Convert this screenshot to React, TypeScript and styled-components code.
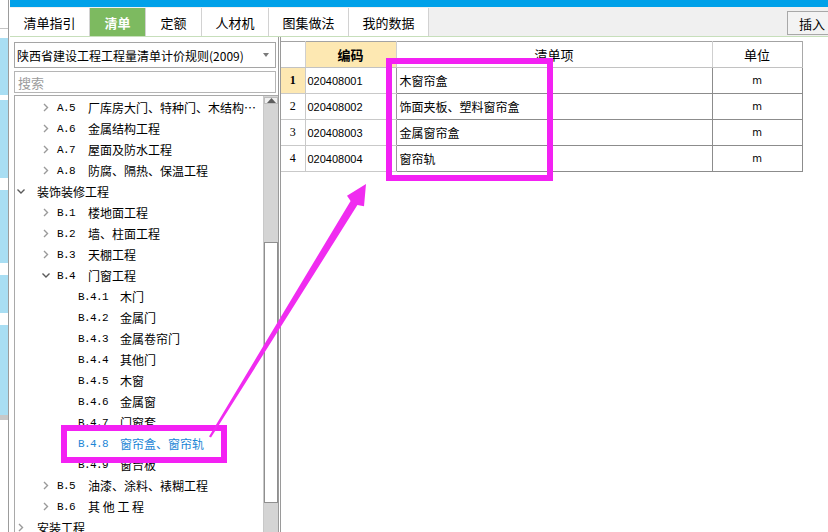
import React from 'react'
import styled, { createGlobalStyle, css } from 'styled-components'

const GlobalStyle = createGlobalStyle`
  html, body {
    margin: 0;
    padding: 0;
  }
  body {
    width: 828px;
    height: 532px;
    overflow: hidden;
    background: #fff;
    font-family: "Noto Sans CJK SC", "Liberation Sans", sans-serif;
    color: #000;
  }
  * {
    box-sizing: border-box;
  }
`

type TreeRow = {
  level: 1 | 2 | 3
  chevron?: 'right' | 'down'
  code?: string
  name: string
  active?: boolean
}

const treeRows: TreeRow[] = [
  { level: 2, chevron: 'right', code: 'A.5', name: '厂库房大门、特种门、木结构…' },
  { level: 2, chevron: 'right', code: 'A.6', name: '金属结构工程' },
  { level: 2, chevron: 'right', code: 'A.7', name: '屋面及防水工程' },
  { level: 2, chevron: 'right', code: 'A.8', name: '防腐、隔热、保温工程' },
  { level: 1, chevron: 'down', name: '装饰装修工程' },
  { level: 2, chevron: 'right', code: 'B.1', name: '楼地面工程' },
  { level: 2, chevron: 'right', code: 'B.2', name: '墙、柱面工程' },
  { level: 2, chevron: 'right', code: 'B.3', name: '天棚工程' },
  { level: 2, chevron: 'down', code: 'B.4', name: '门窗工程' },
  { level: 3, code: 'B.4.1', name: '木门' },
  { level: 3, code: 'B.4.2', name: '金属门' },
  { level: 3, code: 'B.4.3', name: '金属卷帘门' },
  { level: 3, code: 'B.4.4', name: '其他门' },
  { level: 3, code: 'B.4.5', name: '木窗' },
  { level: 3, code: 'B.4.6', name: '金属窗' },
  { level: 3, code: 'B.4.7', name: '门窗套' },
  { level: 3, code: 'B.4.8', name: '窗帘盒、窗帘轨', active: true },
  { level: 3, code: 'B.4.9', name: '窗台板' },
  { level: 2, chevron: 'right', code: 'B.5', name: '油漆、涂料、裱糊工程' },
  { level: 2, chevron: 'right', code: 'B.6', name: '其 他 工 程' },
  { level: 1, chevron: 'right', name: '安装工程' },
]

const items = [
  { no: 1, code: '020408001', name: '木窗帘盒', unit: 'm' },
  { no: 2, code: '020408002', name: '饰面夹板、塑料窗帘盒', unit: 'm' },
  { no: 3, code: '020408003', name: '金属窗帘盒', unit: 'm' },
  { no: 4, code: '020408004', name: '窗帘轨', unit: 'm' },
]

const tabs = [
  { label: '清单指引', width: 80 },
  { label: '清单', width: 56, active: true },
  { label: '定额', width: 56 },
  { label: '人材机', width: 67 },
  { label: '图集做法', width: 80 },
  { label: '我的数据', width: 80 },
]

// window behind, only a sliver of it is visible
const stripBands: [number, string][] = [
  [28, '#ffffff'],
  [1, '#c4c4c4'],
  [9, '#ffffff'],
  [57, '#a9def3'],
  [5, '#ffffff'],
  [78, '#a9def3'],
  [12, '#ffffff'],
  [73, '#a9def3'],
  [12, '#ffffff'],
  [38, '#a9def3'],
  [12, '#ffffff'],
  [90, '#a9def3'],
  [5, '#c8c8c8'],
  [112, '#ffffff'],
]

export default function App() {
  return (
    <Page>
      <GlobalStyle />
      <SideStrip>
        {stripBands.map(([h, c], i) => (
          <Band key={i} $h={h} $color={c} />
        ))}
      </SideStrip>
      <Main>
        <TopBar />
        <TabBar>
          {tabs.map(t => (
            <Tab key={t.label} $width={t.width} $active={t.active}>
              {t.label}
            </Tab>
          ))}
          <Spacer />
          <InsertButton>插入</InsertButton>
        </TabBar>
        <Body>
          <LeftPanel>
            <Select>
              <span>陕西省建设工程工程量清单计价规则(2009)</span>
              <Caret />
            </Select>
            <Search placeholder="搜索" />
            <Tree>
              <TreeList>
                {treeRows.map((r, i) => (
                  <Row key={i} $level={r.level} $active={r.active}>
                    {r.chevron && (
                      <Chevron $level={r.level}>
                        {r.chevron === 'right' ? (
                          <svg width="8" height="9" viewBox="0 0 8 9">
                            <path d="M2 1 L5.5 4.5 L2 8" fill="none" stroke="#9a9a9a" strokeWidth="1.4" />
                          </svg>
                        ) : (
                          <svg width="8" height="9" viewBox="0 0 8 9">
                            <path d="M0.5 2.5 L4 6 L7.5 2.5" fill="none" stroke="#5a5a5a" strokeWidth="1.4" />
                          </svg>
                        )}
                      </Chevron>
                    )}
                    {r.code && <Code $level={r.level}>{r.code}</Code>}
                    <Name>{r.name}</Name>
                  </Row>
                ))}
              </TreeList>
              <ScrollBar>
                <ScrollUp>
                  <svg width="9" height="5" viewBox="0 0 9 5">
                    <path d="M0 5 L4.5 0 L9 5 Z" fill="#5e5e5e" />
                  </svg>
                </ScrollUp>
                <TrackPart $h={138} />
                <Thumb />
                <TrackPart $h={40} />
              </ScrollBar>
            </Tree>
          </LeftPanel>
          <TablePanel>
            <Grid>
              <colgroup>
                <col style={{ width: 24 }} />
                <col style={{ width: 91 }} />
                <col style={{ width: 316 }} />
                <col style={{ width: 90 }} />
              </colgroup>
              <thead>
                <tr>
                  <HeadCell />
                  <HeadCell $yellow>编码</HeadCell>
                  <HeadCell>清单项</HeadCell>
                  <HeadCell $last>单位</HeadCell>
                </tr>
              </thead>
              <tbody>
                {items.map((it, i) => (
                  <tr key={it.no}>
                    <NoCell $selected={i === 0}>{it.no}</NoCell>
                    <CodeCell $selected={i === 0}>{it.code}</CodeCell>
                    <ItemCell>{it.name}</ItemCell>
                    <UnitCell>{it.unit}</UnitCell>
                  </tr>
                ))}
              </tbody>
            </Grid>
          </TablePanel>
        </Body>
      </Main>

      <Highlight $left={386} $top={58} $width={167} $height={123} />
      <Highlight $left={61} $top={425} $width={166} $height={38} />
      <ArrowLayer width="828" height="532" viewBox="0 0 828 532">
        <polygon
          points="209,436.4 350.6,200.9 347,195.8 366,184 364,206.3 357.4,205.1 211,437.6"
          fill="#f02cf0"
        />
      </ArrowLayer>
    </Page>
  )
}

const Page = styled.div`
  position: relative;
  width: 828px;
  height: 532px;
  display: flex;
  overflow: hidden;
`

const SideStrip = styled.div`
  width: 9px;
  margin-right: 1px;
  border-right: 1px solid #9c9c9c;
  display: flex;
  flex-direction: column;
`

const Band = styled.div<{ $h: number; $color: string }>`
  height: ${p => p.$h}px;
  flex-shrink: 0;
  background: ${p => p.$color};
`

const Main = styled.div`
  flex: 1;
  display: flex;
  flex-direction: column;
  min-width: 0;
`

const TopBar = styled.div`
  height: 7px;
  background: #00a1e9;
`

const TabBar = styled.div`
  height: 30px;
  padding-top: 1px;
  display: flex;
  background: #f0f0f0;
  border-bottom: 1px solid #c7dfbb;
`

const Tab = styled.div<{ $width: number; $active?: boolean }>`
  width: ${p => p.$width}px;
  flex-shrink: 0;
  display: flex;
  align-items: center;
  justify-content: center;
  font-size: 13px;
  background: #fff;
  border-right: 1px solid #d2d2d2;
  ${p =>
    p.$active &&
    css`
      background: #7dba60;
      color: #fff;
      font-weight: 700;
    `}
`

const Spacer = styled.div`
  flex: 1;
`

const InsertButton = styled.div`
  flex-shrink: 0;
  margin-top: 3px;
  height: 24px;
  width: 60px;
  margin-right: -19px;
  padding-left: 11px;
  display: flex;
  align-items: center;
  font-size: 13px;
  background: #f3f3f3;
  border: 1px solid #a8a8a8;
`

const Body = styled.div`
  flex: 1;
  display: flex;
  min-height: 0;
`

const LeftPanel = styled.div`
  width: 268px;
  padding: 5px 0 0 4px;
  display: flex;
  flex-direction: column;
`

const Select = styled.div`
  width: 262px;
  height: 26px;
  border: 1px solid #a5a5a5;
  display: flex;
  align-items: center;
  justify-content: space-between;
  padding: 0 6px 0 2px;
  font-size: 12px;
  background: #fff;
`

const Caret = styled.span`
  width: 0;
  height: 0;
  border-left: 3px solid transparent;
  border-right: 3px solid transparent;
  border-top: 4px solid #7a7a7a;
`

const Search = styled.input`
  width: 262px;
  height: 22px;
  margin-top: 3px;
  border: 1px solid #b5b5b5;
  padding: 0 3px;
  font-family: "Noto Sans CJK SC", sans-serif;
  font-size: 13px;
  outline: none;
  &::placeholder {
    color: #9c9c9c;
  }
`

const Tree = styled.div`
  flex: 1;
  min-height: 0;
  width: 264px;
  margin-top: 2px;
  border-top: 1px solid #a9a9a9;
  border-left: 1px solid #a9a9a9;
  display: flex;
  overflow: hidden;
`

const TreeList = styled.div`
  flex: 1;
  padding-top: 1px;
  overflow: hidden;
`

const Row = styled.div<{ $level: number; $active?: boolean }>`
  height: 21px;
  display: flex;
  align-items: center;
  white-space: pre;
  padding-left: ${p => (p.$level === 1 ? 2 : p.$level === 2 ? 27 : 63)}px;
  color: ${p => (p.$active ? '#1c86d6' : '#000')};
`

const Chevron = styled.span<{ $level: number }>`
  width: 8px;
  height: 9px;
  display: flex;
  margin-right: ${p => (p.$level === 1 ? 12 : 7)}px;
`

const Code = styled.span<{ $level: number }>`
  width: ${p => (p.$level === 2 ? 31 : 42)}px;
  font-family: "Liberation Mono", monospace;
  font-size: 11px;
  letter-spacing: -0.6px;
`

const Name = styled.span`
  font-size: 12px;
`

const ScrollBar = styled.div`
  width: 15px;
  padding-top: 1px;
  display: flex;
  flex-direction: column;
  background: #d4d4d4;
  border-left: 1px solid #c8c8c8;
`

const ScrollUp = styled.div`
  height: 14px;
  display: flex;
  align-items: center;
  justify-content: center;
  background: #f0f0f0;
  border: 1px solid #bcbcbc;
`

const TrackPart = styled.div<{ $h: number }>`
  height: ${p => p.$h}px;
  flex-shrink: 0;
`

const Thumb = styled.div`
  height: 261px;
  flex-shrink: 0;
  background: #fff;
  border: 1px solid #8f8f8f;
`

const TablePanel = styled.div`
  flex: 1;
  padding-top: 4px;
  border-left: 3px double #9a9a9a;
`

const Grid = styled.table`
  border-collapse: collapse;
  table-layout: fixed;
  width: 521px;
  border-top: 1px solid #a3a3a3;
  & td,
  & th {
    padding: 0;
    height: 26px;
  }
`

const HeadCell = styled.th<{ $yellow?: boolean; $last?: boolean }>`
  font-size: 13px;
  font-weight: ${p => (p.$yellow ? 700 : 400)};
  background: ${p => (p.$yellow ? '#fde8b2' : '#fff')};
  border-right: 1px solid ${p => (p.$last ? '#a9a9a9' : '#cfcfcf')};
  border-bottom: 1px solid #c2c2c2;
  text-align: center;
`

const NoCell = styled.td<{ $selected?: boolean }>`
  text-align: center;
  font-family: "Liberation Serif", serif;
  font-size: 12px;
  font-weight: ${p => (p.$selected ? 700 : 400)};
  background: ${p => (p.$selected ? '#fde8b2' : '#fff')};
  border-bottom: 1px solid #c9c9c9;
  border-right: 1px solid #c9c9c9;
`

const CodeCell = styled.td<{ $selected?: boolean }>`
  padding-left: 2px !important;
  font-family: "Liberation Sans", sans-serif;
  font-size: 11px;
  border-bottom: 1px solid #c9c9c9;
  border-right: 1px solid #9a9a9a;
  ${p =>
    p.$selected &&
    css`
      border-left: 1px solid #4aa3d9;
    `}
`

const ItemCell = styled.td`
  padding-left: 3px !important;
  font-size: 12px;
  border-bottom: 1px solid #8c8c8c;
  border-right: 1px solid #8c8c8c;
`

const UnitCell = styled.td`
  text-align: center;
  font-family: "DejaVu Sans", sans-serif;
  font-size: 10px;
  border-bottom: 1px solid #8c8c8c;
  border-right: 1px solid #8c8c8c;
`

const Highlight = styled.div<{ $left: number; $top: number; $width: number; $height: number }>`
  position: absolute;
  left: ${p => p.$left}px;
  top: ${p => p.$top}px;
  width: ${p => p.$width}px;
  height: ${p => p.$height}px;
  border: 6px solid #f321f3;
  pointer-events: none;
`

const ArrowLayer = styled.svg`
  position: absolute;
  left: 0;
  top: 0;
  pointer-events: none;
`
